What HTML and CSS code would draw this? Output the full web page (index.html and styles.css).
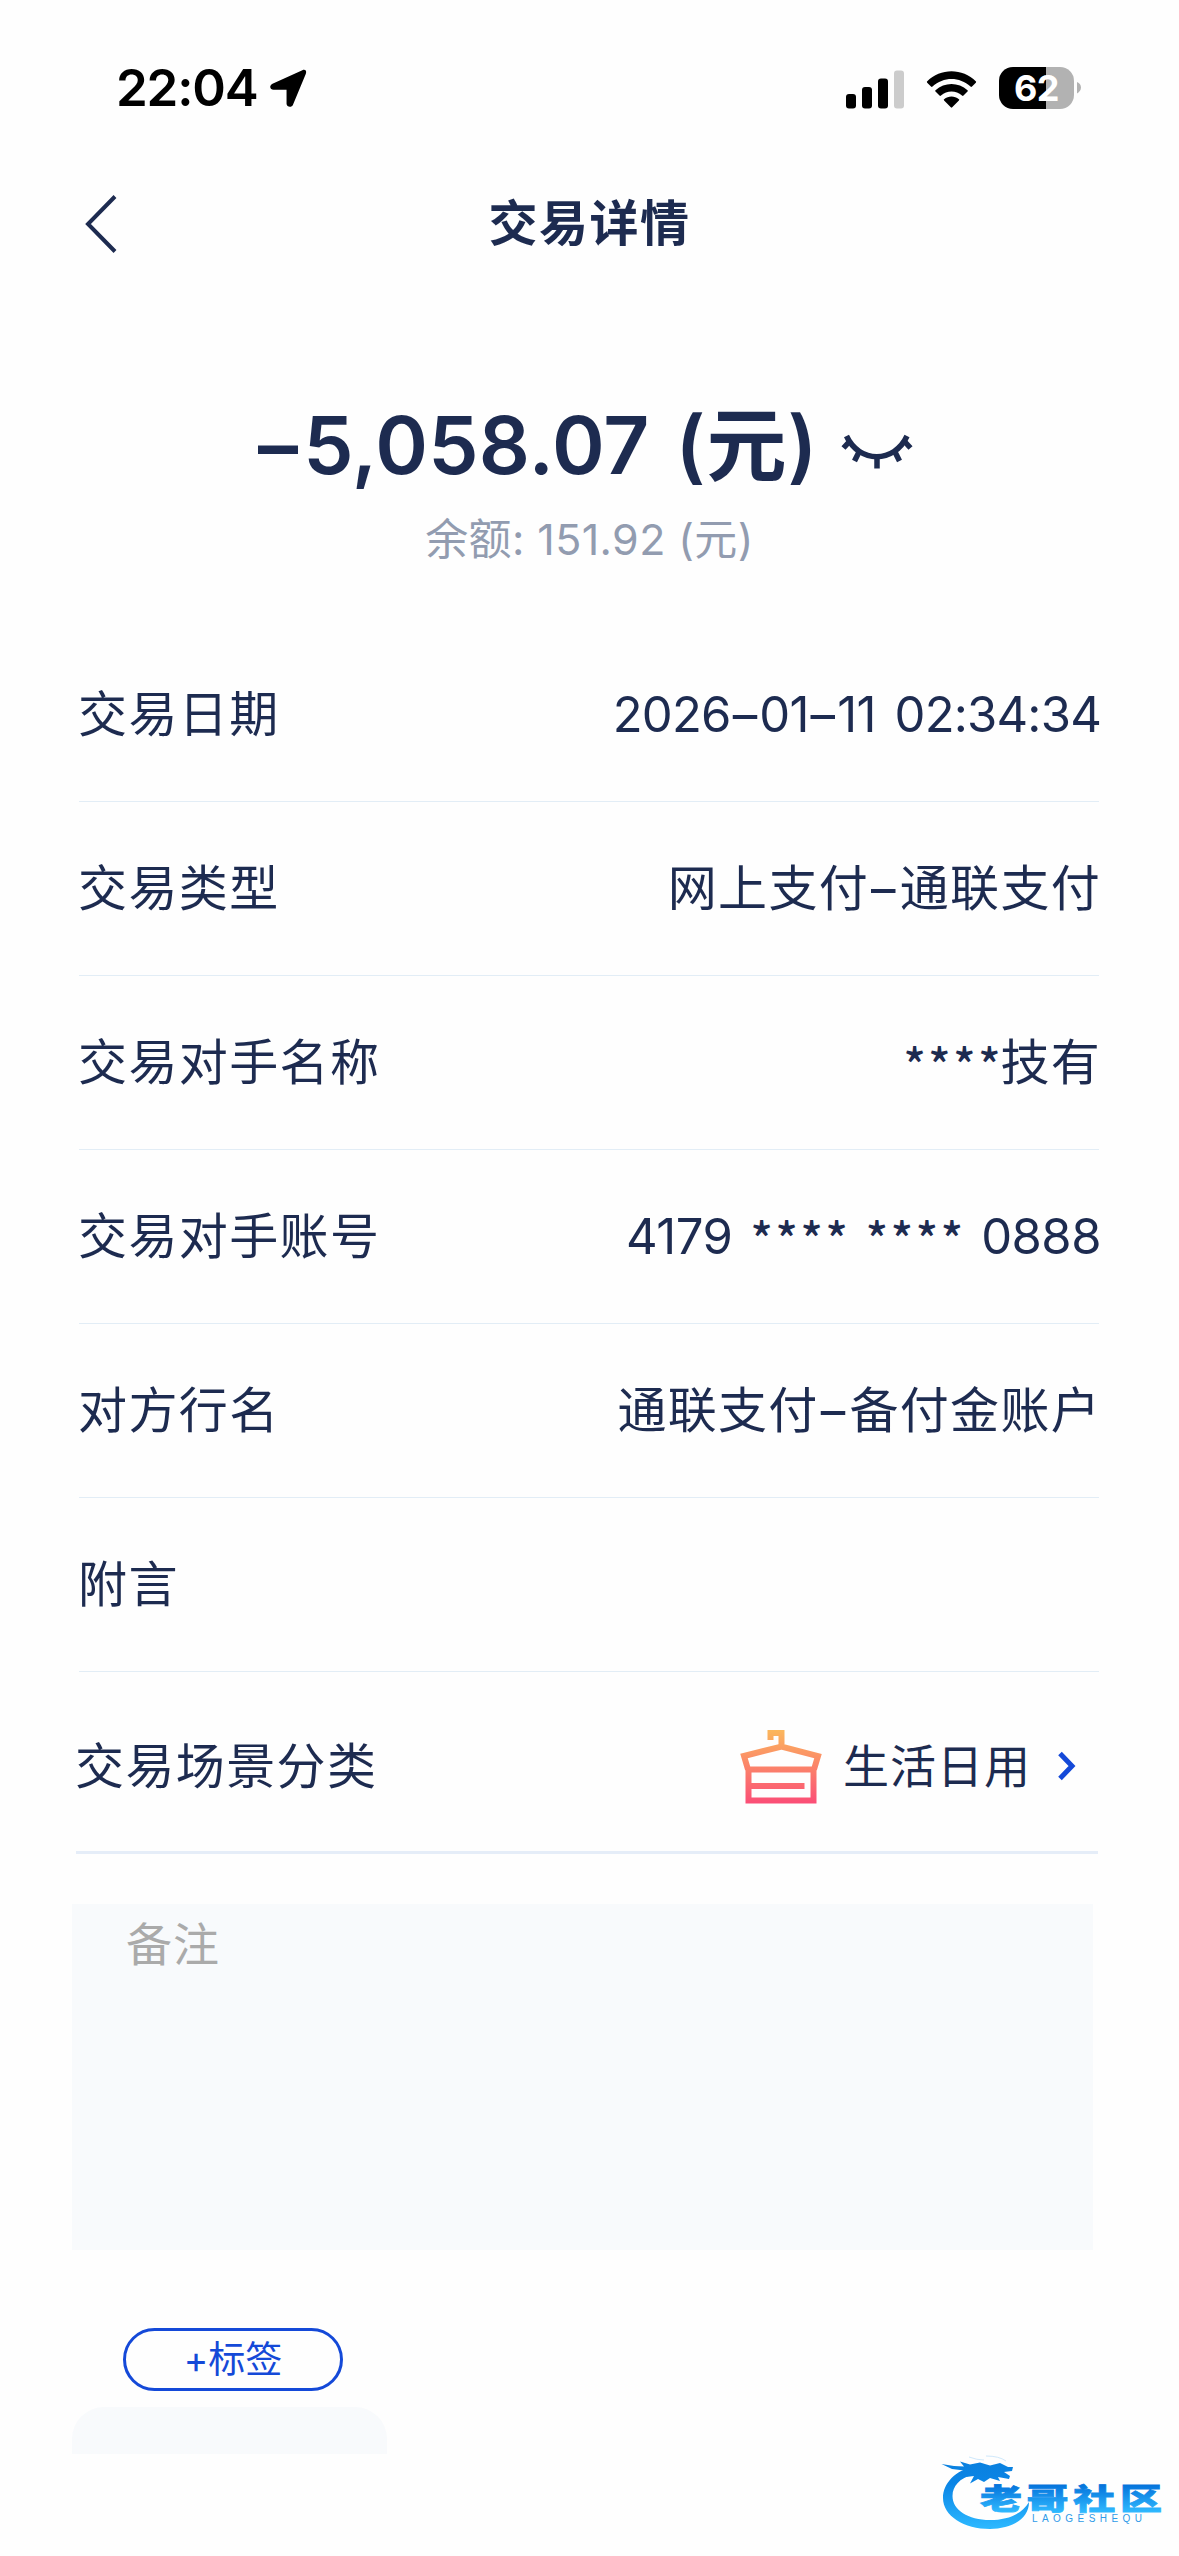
FILE: index.html
```
<!DOCTYPE html>
<html lang="zh-CN">
<head>
<meta charset="utf-8">
<title>交易详情</title>
<link rel="stylesheet" href="styles.css">
</head>
<body>
<div class="screen">
  <div class="status">
    <span class="time">22:04</span>
    <svg class="location" width="39" height="41" viewBox="0 0 40 42"><path d="M3.600 16.200 34.200 2.200C37 1 39 3 37.800 5.800L24.600 37.600C23.200 41 18 40 18 36.600V22.300H4.600C.8 22.300 0 17.900 3.600 16.200Z"/></svg>
    <svg class="signal" width="58" height="39" viewBox="0 0 58 39"><rect x="0" y="24" width="10" height="14.500" rx="3"/><rect x="16" y="17" width="10" height="21.500" rx="3"/><rect x="32" y="8.500" width="10" height="30" rx="3"/><rect x="48" y=".5" width="10" height="38" rx="3" fill="#ccc"/></svg>
    <svg class="wifi" width="51" height="39" viewBox="0 0 50 39"><path d="M.5 11.500C14-2.200 36-2.200 49.500 11.500 49.700 12 49.700 12.400 49.300 12.800L45.500 16.500C45 17 44.500 17 44 16.500 33 6.500 17 6.500 6 16.500 5.500 17 5 17 4.500 16.500L.7 12.800C.3 12.400.3 12 .5 11.500ZM9 20.300C18 12 32 12 41 20.300 41.400 20.800 41.400 21.200 41 21.600L37 25.500C36.500 26 36 26 35.500 25.500 29.500 20.200 20.500 20.200 14.500 25.500 14 26 13.500 26 13 25.500L9 21.600C8.600 21.200 8.600 20.800 9 20.300ZM17.600 29.200C22 25.600 28 25.600 32.400 29.200 32.900 29.600 32.900 30 32.400 30.500L25.700 37.300C25.200 37.800 24.800 37.800 24.300 37.300L17.600 30.500C17.100 30 17.100 29.600 17.600 29.200Z"/></svg>
    <div class="battery"><span class="level">62</span><svg width="5" height="14" viewBox="0 0 5 14"><path d="M0 1C5.300 3 5.300 10 0 12.500Z" fill="#b2b2b2"/></svg></div>
  </div>
  <div class="navbar">
    <svg class="back" width="32" height="58" viewBox="0 0 32 58"><path d="M30 1.500 3 29 30 56.500" fill="none" stroke="#1d2b50" stroke-width="4"/></svg>
    <h1 class="title">交易详情</h1>
  </div>
  <div class="summary">
    <div class="amount"><span class="figure"><span class="minus">–</span>5,058.07</span><span class="unit">(元)</span>
      <svg class="eye" width="72" height="36" viewBox="0 0 72 36" fill="none" stroke="#1d2b50"><path d="M5.500 2C18 29.500 53.500 29.500 66 2" stroke-width="5.500"/><path d="M8 8 2.500 14M18 18 13.500 27M36 23V34.500M54 18 58.500 27M64 8 69.500 14" stroke-width="5.500"/></svg>
    </div>
    <div class="balance">余额: 151.92 (元)</div>
  </div>
  <div class="details">
    <div class="row"><span class="label">交易日期</span><span class="value date">2026<i>–</i>01<i>–</i>11 02:34:34</span></div>
    <div class="row"><span class="label">交易类型</span><span class="value">网上支付<i>–</i>通联支付</span></div>
    <div class="row"><span class="label">交易对手名称</span><span class="value"><span class="stars">****</span>技有</span></div>
    <div class="row"><span class="label">交易对手账号</span><span class="value acct">4179 <span class="stars">****</span> <span class="stars">****</span> 0888</span></div>
    <div class="row"><span class="label">对方行名</span><span class="value">通联支付<i>–</i>备付金账户</span></div>
    <div class="row"><span class="label">附言</span></div>
  </div>
  <div class="category">
    <span class="label">交易场景分类</span>
    <svg class="hanger" width="82" height="76" viewBox="0 0 82 76"><defs><linearGradient id="warm" gradientUnits="userSpaceOnUse" x1="0" y1="0" x2="0" y2="75"><stop offset="0" stop-color="#fbb95c"/><stop offset="1" stop-color="#fb4d77"/></linearGradient></defs><g fill="none" stroke="url(#warm)" stroke-width="6"><path d="M30.500 11V4H41.500V18M8 40.500 4 27 41.500 17.500 78 27 74 40.500M8.500 40.500H74M8.500 38V71.500H73.500V38M8.500 57H64.500"/></g></svg>
    <span class="cat-name">生活日用</span>
    <svg class="chevron" width="20" height="30" viewBox="0 0 20 30"><path d="M3 2.500 15 15 3 27.500" fill="none" stroke="#1449d8" stroke-width="5"/></svg>
  </div>
  <div class="note">备注</div>
  <div class="tag">+标签</div>
  <div class="panel"></div>
</div>
<svg class="watermark" width="230" height="90" viewBox="0 0 230 90">
  <defs><linearGradient id="blue" gradientUnits="userSpaceOnUse" x1="0" y1="10" x2="0" y2="78"><stop offset="0" stop-color="#0a80de"/><stop offset=".35" stop-color="#0b85e6"/><stop offset="1" stop-color="#2cb8ff"/></linearGradient>
  <linearGradient id="word" gradientUnits="userSpaceOnUse" x1="0" y1="-25" x2="0" y2="3"><stop offset="0" stop-color="#0574dc"/><stop offset="1" stop-color="#30baff"/></linearGradient></defs>
  <g fill="url(#blue)">
    <path d="M33 17C16 20 3 33 3 48 3 66 24 79 50 79 70 79 89 70 89 52 82 64 68 70 50 70 28 70 12.500 60 12.500 46 12.500 36 20 28 32 25Z"/>
    <path d="M1.500 14 14 16 24 16.500 20 11.500 30 14.500 40 12.500 50 15.500 60 13 68 17 73 17 72 21 64 22 70 26 69 29 58 27 60 31 50 28 44 32 38 29 30 33.500 34 26 26 27 28 21 12 19Z"/>
  </g>
  <path d="M29 7Q37 10 44 10M46 6Q59 6 66 11" fill="none" stroke="#cfe8fb" stroke-width="1"/>
  <g class="wm-word" transform="translate(40 59.500) scale(1.4 .97)" fill="url(#word)" stroke="url(#word)"><text x="0" y="0">老</text><text x="33.300" y="0">哥</text><text x="66.600" y="0">社</text><text x="100" y="0">区</text></g>
  <text class="wm-latin" x="92" y="72" textLength="110" fill="#2f9be8">LAOGESHEQU</text>
</svg>
</body>
</html>
```
FILE: styles.css
```
* { box-sizing: border-box; }
body {
  margin: 0;
  background: #fefefe;
  color: #1d2b50;
  font-family: Inter, "Noto Sans CJK SC", sans-serif;
  position: relative;
  width: 1179px;
  height: 2556px;
  overflow: hidden;
}
svg { display: block; flex: none; }
.screen { display: flex; flex-direction: column; }
.status {
  display: flex;
  align-items: center;
  height: 136px;
  padding: 40px 97px 0 116px;
  color: #000;
}
.time { font-size: 51px; font-weight: 600; line-height: 60px; letter-spacing: -1.200px; }
.location { margin: 1px 0 0 12px; }
.signal { margin-left: auto; margin-top: 2px; }
.wifi { margin-left: 22px; margin-top: 2px; }
.battery { display: flex; align-items: center; gap: 3px; margin: 0 0 0 22px; }
.level {
  width: 75px;
  height: 42px;
  border-radius: 14px;
  background: linear-gradient(90deg, #000 62.500%, #b2b2b2 62.500%);
  color: #fff;
  font-size: 36px;
  font-weight: 700;
  letter-spacing: -.5px;
  line-height: 43px;
  text-align: center;
}
.navbar { display: flex; align-items: center; height: 176px; padding: 0 85px; }
.title {
  flex: 1;
  margin: 0 32px 0 0;
  font-size: 49px;
  font-weight: 600;
  letter-spacing: 1.500px;
  text-align: center;
  line-height: 70px;
}
.summary { height: 316px; padding-top: 83px; }
.amount { display: flex; align-items: center; height: 100px; padding-left: 258px; }
.figure, .unit { font-size: 80px; font-weight: 600; line-height: 100px; }
.figure { letter-spacing: .2px; }
.minus { margin-right: 5px; }
.unit { margin-left: 26px; letter-spacing: 1px; }
.eye { margin: 14px 0 0 23px; }
.balance {
  margin-top: 12px;
  color: #929cb0;
  font-size: 43px;
  letter-spacing: .4px;
  line-height: 64px;
  text-align: center;
}
.details { padding: 0 80px 0 79px; }
.row {
  display: flex;
  align-items: center;
  justify-content: space-between;
  height: 174px;
  border-bottom: 1px solid #e2edf6;
}
.label { font-size: 49px; letter-spacing: 1.400px; line-height: 70px; margin-left: -1px; }
.value { font-size: 49px; letter-spacing: 1.300px; line-height: 70px; margin-right: -2px; }
.value i { font-style: normal; margin: 0 3px 0 2px; }
.date { letter-spacing: -.8px; word-spacing: 6px; }
.acct { letter-spacing: -.5px; word-spacing: 5px; }
.stars {
  display: inline-block;
  width: 97px;
  font-family: "Noto Sans CJK SC", sans-serif;
  font-size: 46px;
  font-weight: 500;
  line-height: 60px;
  letter-spacing: 2.700px;
  white-space: nowrap;
  transform: translateY(3px);
}
.category {
  display: flex;
  align-items: center;
  height: 182px;
  margin: 0 81px 0 76px;
  padding: 10px 21px 0 0;
  border-bottom: 3px solid #e5edf8;
}
.hanger { margin-left: auto; }
.cat-name { margin: -2px 26px 0 21px; font-size: 46px; letter-spacing: 1px; line-height: 70px; }
.chevron { margin-top: -1px; }
.note {
  width: 1021px;
  height: 346px;
  margin: 50px 0 0 72px;
  padding: 7px 54px;
  background: #f8fafc;
  color: #aaa;
  font-size: 46px;
  letter-spacing: 1px;
  line-height: 66px;
}
.tag {
  width: 220px;
  height: 63px;
  margin: 78px 0 0 123px;
  border: 3px solid #1449d8;
  border-radius: 32px;
  color: #1449d8;
  font-size: 37px;
  line-height: 58px;
  text-align: center;
}
.panel {
  width: 315px;
  height: 47px;
  margin: 16px 0 0 72px;
  border-radius: 32px 32px 0 0;
  background: #f8fafc;
}
.watermark { position: absolute; left: 940px; top: 2450px; }
.wm-word { font: 900 30px "Noto Sans CJK SC", sans-serif; stroke-width: .8px; }
.wm-latin { font: 400 10px "Liberation Sans", sans-serif; }
```
